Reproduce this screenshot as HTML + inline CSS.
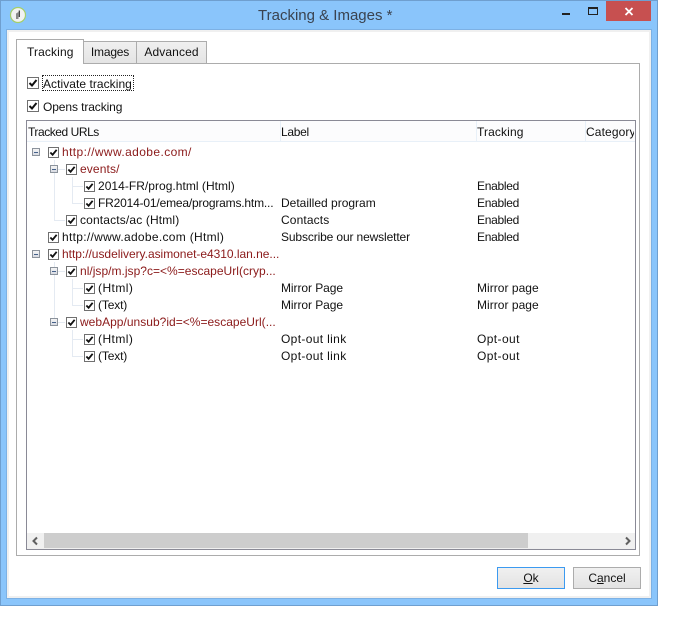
<!DOCTYPE html>
<html>
<head>
<meta charset="utf-8">
<style>
html,body{margin:0;padding:0;background:#fff;}
#r{position:relative;width:678px;height:623px;overflow:hidden;background:#fff;font-family:"Liberation Sans",sans-serif;font-size:12px;color:#111;}
#r div,#r svg{position:absolute;box-sizing:border-box;}
.t{white-space:nowrap;height:16px;line-height:16px;letter-spacing:.12px;}
.u{color:#8b1a1a;}
.c{width:11px;height:11px;background:#fff;border:1px solid #707070;}
.c svg{left:0;top:0;width:9px;height:9px;}
.e{width:8px;height:8px;background:linear-gradient(#f4f4f4,#d8dbe2);border:1px solid #8c939c;}
.e::after{content:"";position:absolute;left:1px;top:3px;width:4px;height:1px;background:#45618a;}
.h{background:#e4eaf2;}
.v{background:#e4eaf2;width:1px;}
.tab{background:linear-gradient(#f0f0f0,#e4e4e4);border:1px solid #acacac;border-bottom:0;text-align:center;line-height:20px;}
.b{background:linear-gradient(#f0f0f0,#e3e3e3);text-align:center;line-height:20px;}
</style>
</head>
<body>
<div id="r">
  <!-- window frame -->
  <div style="left:0;top:0;width:658px;height:606px;background:#8ac5fb;border:1px solid #6f9fcf;"></div>
  <div style="left:7px;top:30px;width:644px;height:568px;background:#fff;border:2px solid #f0f0f0;box-shadow:0 0 0 1px #7db1e4;"></div>

  <!-- title bar -->
  <div class="t" style="left:258px;top:7px;height:18px;line-height:18px;font-size:15px;color:#3a4350;letter-spacing:0;">Tracking &amp; Images *</div>
  <svg style="left:9px;top:6px;width:18px;height:18px;" viewBox="0 0 18 18">
    <circle cx="9" cy="9" r="7.5" fill="#f2f2f2" stroke="#a4cf6a" stroke-width="1.2"/>
    <path d="M7 13V7.5L9.5 6V13Z" fill="#8a8a8a"/><path d="M10.3 4.5V11" stroke="#333" stroke-width="1.2"/>
  </svg>
  <div style="left:562px;top:13px;width:8px;height:2px;background:#222;"></div>
  <div style="left:588px;top:7px;width:10px;height:8px;border:1px solid #222;border-top-width:2px;"></div>
  <div style="left:606px;top:1px;width:45px;height:20px;background:#c75050;"></div>
  <svg style="left:624px;top:7px;width:10px;height:9px;" viewBox="0 0 10 9"><path d="M1.5 1L8.5 8M8.5 1L1.5 8" stroke="#fff" stroke-width="1.8"/></svg>

  <!-- tab pane -->
  <div style="left:16px;top:63px;width:624px;height:493px;background:#fff;border:1px solid #acacac;"></div>
  <div class="tab" style="left:83px;top:41px;width:54px;height:22px;letter-spacing:-.2px;">Images</div>
  <div class="tab" style="left:136px;top:41px;width:71px;height:22px;letter-spacing:.12px;">Advanced</div>
  <div style="left:16px;top:39px;width:68px;height:25px;background:#fff;border:1px solid #acacac;border-bottom:0;"></div>
  <div class="t" style="left:27px;top:44px;">Tracking</div>

  <!-- top checkboxes -->
  <div class="c" style="left:27px;top:77px;width:12px;height:12px;"><svg style="width:10px;height:10px;" viewBox="0 0 10 10"><path d="M1.5 5L4 7.5L8.5 2" fill="none" stroke="#111" stroke-width="2"/></svg></div>
  <div style="left:42px;top:75px;width:92px;height:16px;border:1px dotted #222;"></div>
  <div class="t" style="left:43px;top:76px;letter-spacing:.05px;">Activate tracking</div>
  <div class="c" style="left:27px;top:100px;width:12px;height:12px;"><svg style="width:10px;height:10px;" viewBox="0 0 10 10"><path d="M1.5 5L4 7.5L8.5 2" fill="none" stroke="#111" stroke-width="2"/></svg></div>
  <div class="t" style="left:43px;top:99px;letter-spacing:-.1px;">Opens tracking</div>

  <!-- list -->
  <div style="left:26px;top:120px;width:610px;height:430px;background:#fff;border:1px solid #8a8a96;"></div>
  <div style="left:27px;top:121px;width:608px;height:21px;background:#fcfcfd;border-bottom:1px solid #e8f0f8;"></div>
  <div style="left:280px;top:121px;width:1px;height:21px;background:#e8f0f8;"></div>
  <div style="left:476px;top:121px;width:1px;height:21px;background:#e8f0f8;"></div>
  <div style="left:585px;top:121px;width:1px;height:21px;background:#e8f0f8;"></div>
  <div class="t" style="left:28px;top:124px;letter-spacing:-.45px;">Tracked URLs</div>
  <div class="t" style="left:281px;top:124px;letter-spacing:-.3px;">Label</div>
  <div class="t" style="left:477px;top:124px;">Tracking</div>
  <div class="t" style="left:586px;top:124px;width:48px;overflow:hidden;">Category</div>

  <!-- tree lines -->
  <div class="v" style="left:54px;top:160px;height:60px;"></div>
  <div class="h" style="left:54px;top:220px;width:11px;height:1px;"></div>
  <div class="h" style="left:58px;top:169px;width:7px;height:1px;"></div>
  <div class="v" style="left:72px;top:177px;height:26px;"></div>
  <div class="h" style="left:72px;top:186px;width:11px;height:1px;"></div>
  <div class="h" style="left:72px;top:203px;width:11px;height:1px;"></div>
  <div class="v" style="left:54px;top:262px;height:60px;"></div>
  <div class="h" style="left:58px;top:271px;width:7px;height:1px;"></div>
  <div class="h" style="left:58px;top:322px;width:7px;height:1px;"></div>
  <div class="v" style="left:72px;top:279px;height:26px;"></div>
  <div class="h" style="left:72px;top:288px;width:11px;height:1px;"></div>
  <div class="h" style="left:72px;top:305px;width:11px;height:1px;"></div>
  <div class="v" style="left:72px;top:330px;height:26px;"></div>
  <div class="h" style="left:72px;top:339px;width:11px;height:1px;"></div>
  <div class="h" style="left:72px;top:356px;width:11px;height:1px;"></div>

  <!-- expanders -->
  <div class="e" style="left:32px;top:148px;"></div>
  <div class="e" style="left:50px;top:165px;"></div>
  <div class="e" style="left:32px;top:250px;"></div>
  <div class="e" style="left:50px;top:267px;"></div>
  <div class="e" style="left:50px;top:318px;"></div>

  <!-- checkboxes -->
  <div class="c" style="left:48px;top:147px;"><svg viewBox="0 0 10 10"><path d="M1.5 5L4 7.5L8.5 2" fill="none" stroke="#111" stroke-width="2"/></svg></div>
  <div class="c" style="left:66px;top:164px;"><svg viewBox="0 0 10 10"><path d="M1.5 5L4 7.5L8.5 2" fill="none" stroke="#111" stroke-width="2"/></svg></div>
  <div class="c" style="left:84px;top:181px;"><svg viewBox="0 0 10 10"><path d="M1.5 5L4 7.5L8.5 2" fill="none" stroke="#111" stroke-width="2"/></svg></div>
  <div class="c" style="left:84px;top:198px;"><svg viewBox="0 0 10 10"><path d="M1.5 5L4 7.5L8.5 2" fill="none" stroke="#111" stroke-width="2"/></svg></div>
  <div class="c" style="left:66px;top:215px;"><svg viewBox="0 0 10 10"><path d="M1.5 5L4 7.5L8.5 2" fill="none" stroke="#111" stroke-width="2"/></svg></div>
  <div class="c" style="left:48px;top:232px;"><svg viewBox="0 0 10 10"><path d="M1.5 5L4 7.5L8.5 2" fill="none" stroke="#111" stroke-width="2"/></svg></div>
  <div class="c" style="left:48px;top:249px;"><svg viewBox="0 0 10 10"><path d="M1.5 5L4 7.5L8.5 2" fill="none" stroke="#111" stroke-width="2"/></svg></div>
  <div class="c" style="left:66px;top:266px;"><svg viewBox="0 0 10 10"><path d="M1.5 5L4 7.5L8.5 2" fill="none" stroke="#111" stroke-width="2"/></svg></div>
  <div class="c" style="left:84px;top:283px;"><svg viewBox="0 0 10 10"><path d="M1.5 5L4 7.5L8.5 2" fill="none" stroke="#111" stroke-width="2"/></svg></div>
  <div class="c" style="left:84px;top:300px;"><svg viewBox="0 0 10 10"><path d="M1.5 5L4 7.5L8.5 2" fill="none" stroke="#111" stroke-width="2"/></svg></div>
  <div class="c" style="left:66px;top:317px;"><svg viewBox="0 0 10 10"><path d="M1.5 5L4 7.5L8.5 2" fill="none" stroke="#111" stroke-width="2"/></svg></div>
  <div class="c" style="left:84px;top:334px;"><svg viewBox="0 0 10 10"><path d="M1.5 5L4 7.5L8.5 2" fill="none" stroke="#111" stroke-width="2"/></svg></div>
  <div class="c" style="left:84px;top:351px;"><svg viewBox="0 0 10 10"><path d="M1.5 5L4 7.5L8.5 2" fill="none" stroke="#111" stroke-width="2"/></svg></div>

  <!-- tree text -->
  <div class="t u" style="left:62px;top:144px;letter-spacing:.4px;">http://www.adobe.com/</div>
  <div class="t u" style="left:80px;top:161px;">events/</div>
  <div class="t" style="left:98px;top:178px;letter-spacing:.03px;">2014-FR/prog.html (Html)</div>
  <div class="t" style="left:98px;top:195px;letter-spacing:-.18px;">FR2014-01/emea/programs.htm...</div>
  <div class="t" style="left:80px;top:212px;letter-spacing:.15px;">contacts/ac (Html)</div>
  <div class="t" style="left:62px;top:229px;letter-spacing:.3px;">http://www.adobe.com (Html)</div>
  <div class="t u" style="left:62px;top:246px;letter-spacing:-.03px;">http://usdelivery.asimonet-e4310.lan.ne...</div>
  <div class="t u" style="left:80px;top:263px;letter-spacing:.02px;">nl/jsp/m.jsp?c=&lt;%=escapeUrl(cryp...</div>
  <div class="t" style="left:98px;top:280px;letter-spacing:.45px;">(Html)</div>
  <div class="t" style="left:98px;top:297px;letter-spacing:-.15px;">(Text)</div>
  <div class="t u" style="left:80px;top:314px;letter-spacing:.02px;">webApp/unsub?id=&lt;%=escapeUrl(...</div>
  <div class="t" style="left:98px;top:331px;letter-spacing:.45px;">(Html)</div>
  <div class="t" style="left:98px;top:348px;letter-spacing:-.15px;">(Text)</div>

  <!-- label column -->
  <div class="t" style="left:281px;top:195px;letter-spacing:0;">Detailled program</div>
  <div class="t" style="left:281px;top:212px;">Contacts</div>
  <div class="t" style="left:281px;top:229px;letter-spacing:-.13px;">Subscribe our newsletter</div>
  <div class="t" style="left:281px;top:280px;letter-spacing:-.06px;">Mirror Page</div>
  <div class="t" style="left:281px;top:297px;letter-spacing:-.06px;">Mirror Page</div>
  <div class="t" style="left:281px;top:331px;letter-spacing:.35px;">Opt-out link</div>
  <div class="t" style="left:281px;top:348px;letter-spacing:.35px;">Opt-out link</div>

  <!-- tracking column -->
  <div class="t" style="left:477px;top:178px;letter-spacing:-.3px;">Enabled</div>
  <div class="t" style="left:477px;top:195px;letter-spacing:-.3px;">Enabled</div>
  <div class="t" style="left:477px;top:212px;letter-spacing:-.3px;">Enabled</div>
  <div class="t" style="left:477px;top:229px;letter-spacing:-.3px;">Enabled</div>
  <div class="t" style="left:477px;top:280px;letter-spacing:.03px;">Mirror page</div>
  <div class="t" style="left:477px;top:297px;letter-spacing:.03px;">Mirror page</div>
  <div class="t" style="left:477px;top:331px;letter-spacing:.4px;">Opt-out</div>
  <div class="t" style="left:477px;top:348px;letter-spacing:.4px;">Opt-out</div>

  <!-- scrollbar -->
  <div style="left:27px;top:533px;width:608px;height:16px;background:#f0f0f0;"></div>
  <div style="left:44px;top:533px;width:484px;height:15px;background:#cdcdcd;"></div>
  <svg style="left:31px;top:536px;width:9px;height:10px;" viewBox="0 0 9 10"><path d="M6 1.5L2.5 5L6 8.5" fill="none" stroke="#606060" stroke-width="2"/></svg>
  <svg style="left:623px;top:536px;width:9px;height:10px;" viewBox="0 0 9 10"><path d="M3 1.5L6.5 5L3 8.5" fill="none" stroke="#606060" stroke-width="2"/></svg>

  <!-- buttons -->
  <div class="b" style="left:497px;top:567px;width:68px;height:22px;border:1px solid #3c9af0;"><span style="text-decoration:underline;">O</span>k</div>
  <div class="b" style="left:573px;top:567px;width:68px;height:22px;border:1px solid #acacac;">C<span style="text-decoration:underline;">a</span>ncel</div>
</div>
</body>
</html>
